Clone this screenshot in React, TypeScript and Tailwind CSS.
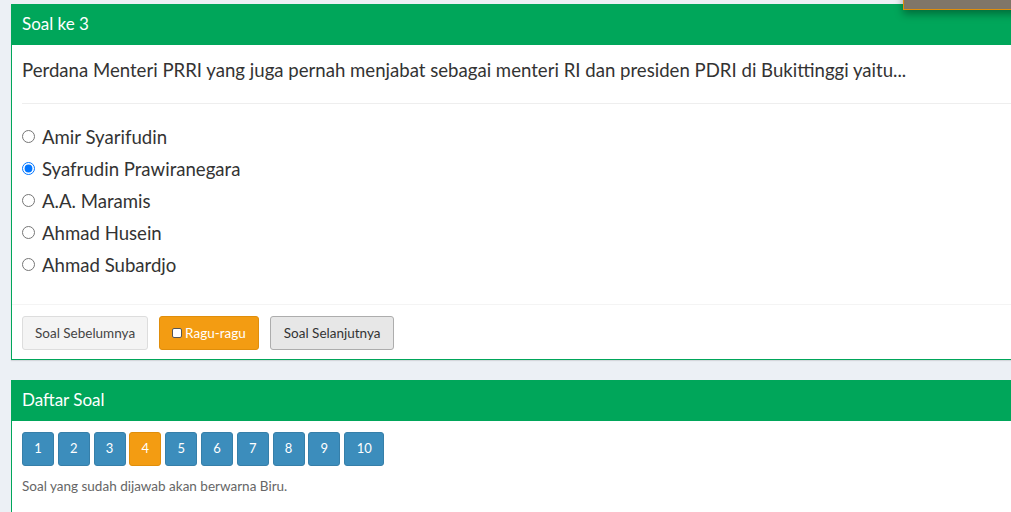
import React, { useState } from "react";

const options = ["Amir Syarifudin", "Syafrudin Prawiranegara", "A.A. Maramis", "Ahmad Husein", "Ahmad Subardjo"];
const numbers = [1, 2, 3, 4, 5, 6, 7, 8, 9, 10];

export default function App() {
    const [picked, setPicked] = useState(1);

    return (
        <div className="relative w-[1011px] h-[512px] overflow-hidden bg-[#ecf0f5] pl-[11px] pt-[4px] text-[#333] font-['Lato','Noto_Sans',sans-serif]">
            {/* floating box cut off at the top right */}
            <div className="absolute right-[-20px] top-[-30px] w-[128px] h-[40px] bg-[#7f7668] border border-[#e08e0b] shadow-[0_4px_8px_rgba(0,0,0,0.35)]" />

            <div className="w-[1040px] bg-white border border-[#00a65a] shadow-[0_1px_1px_rgba(0,0,0,0.1)]">
                <div className="h-[40px] bg-[#00a65a] px-[10px] pb-[2px] flex items-center text-white text-[17px]">Soal ke 3</div>
                <div className="px-[10px]">
                    <div className="pt-[12px] pb-[20px] border-b border-[#eee] text-[18.6px] leading-[26px]">
                        Perdana Menteri PRRI yang juga pernah menjabat sebagai menteri RI dan presiden PDRI di Bukittinggi yaitu...
                    </div>
                    <div className="pt-[18px] pb-[22px] flex flex-col">
                        {options.map((o, i) => (
                            <label key={o} className="h-[32px] flex items-center gap-[7px] text-[18.6px]">
                                <input
                                    type="radio"
                                    name="jawab"
                                    checked={picked === i}
                                    onChange={() => setPicked(i)}
                                    className="m-0 w-[13px] h-[13px] -mt-[4px]"
                                />
                                {o}
                            </label>
                        ))}
                    </div>
                </div>
                <div className="border-t border-[#f4f4f4] px-[10px] pt-[11px] pb-[9px] flex gap-[11px] text-[13.5px]">
                    <button className="h-[34px] px-[12px] rounded-[3px] bg-[#f4f4f4] border border-[#ddd] text-[#444]">Soal Sebelumnya</button>
                    <button className="h-[34px] px-[12px] rounded-[3px] bg-[#f39c12] border border-[#e08e0b] text-white flex items-center gap-[3px]">
                        <span className="w-[10px] h-[10px] bg-white rounded-[2px] border border-[#555]" />
                        Ragu-ragu
                    </button>
                    <button className="h-[34px] px-[13px] rounded-[3px] bg-[#e7e7e7] border border-[#adadad] text-[#333]">Soal Selanjutnya</button>
                </div>
            </div>

            <div className="mt-[20px] w-[1040px] h-[200px] bg-white border border-[#00a65a] border-b-0">
                <div className="h-[40px] bg-[#00a65a] px-[10px] pb-[2px] flex items-center text-white text-[17px]">Daftar Soal</div>
                <div className="px-[10px] pt-[11px]">
                    <div className="flex gap-[3.8px]">
                        {numbers.map((n) => (
                            <button
                                key={n}
                                className={
                                    n === 4
                                        ? "h-[34px] w-[32px] rounded-[3px] bg-[#f39c12] border border-[#e08e0b] text-white text-[13px]"
                                        : n === 10
                                        ? "h-[34px] w-[40px] rounded-[3px] bg-[#3c8dbc] border border-[#367fa9] text-white text-[13px]"
                                        : "h-[34px] w-[32px] rounded-[3px] bg-[#3c8dbc] border border-[#367fa9] text-white text-[13px]"
                                }
                            >
                                {n}
                            </button>
                        ))}
                    </div>
                    <p className="mt-[10px] text-[13.5px] text-[#666]">Soal yang sudah dijawab akan berwarna Biru.</p>
                </div>
            </div>
        </div>
    );
}
